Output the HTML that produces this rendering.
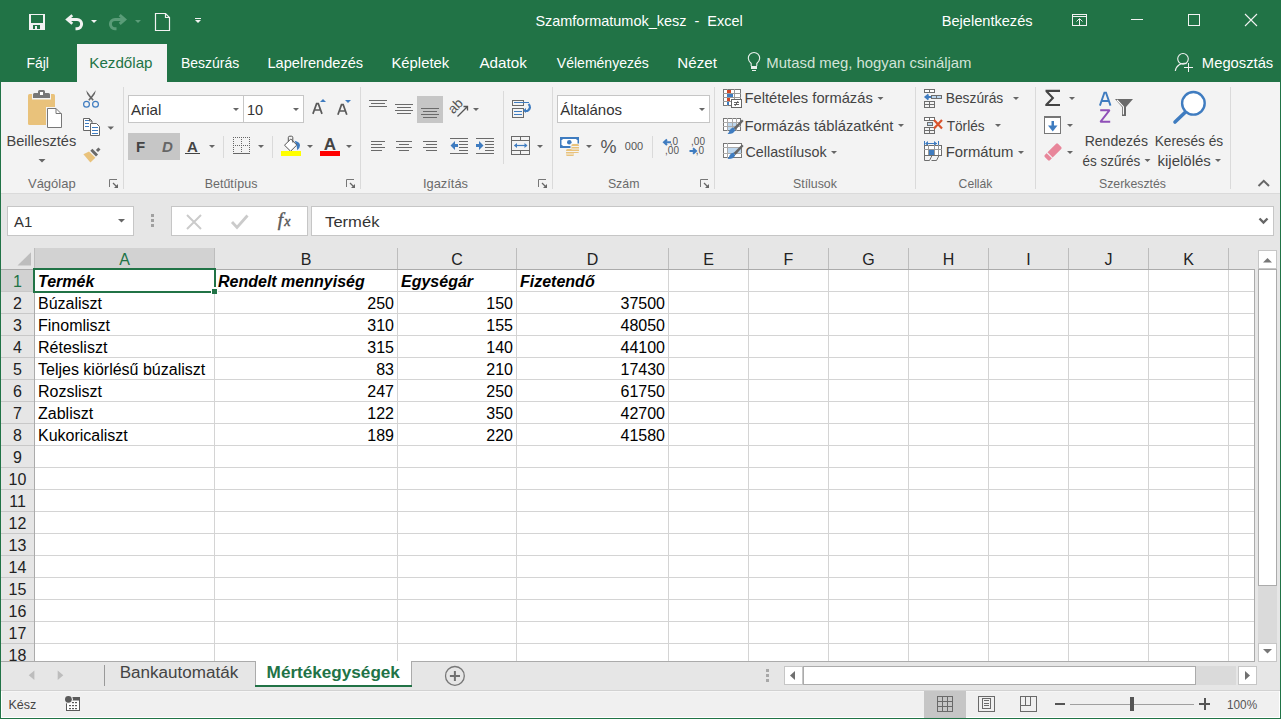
<!DOCTYPE html><html><head><meta charset="utf-8"><style>
*{margin:0;padding:0}
html,body{width:1281px;height:719px;overflow:hidden;background:#217346}
</style></head><body><svg width="1281" height="719" viewBox="0 0 1281 719" style="position:absolute;left:0;top:0" font-family="Liberation Sans, sans-serif"><rect x="0" y="0" width="1281" height="719" fill="#217346" />
<rect x="29" y="14" width="16" height="16" fill="#F2F2F2" />
<rect x="31" y="15" width="12" height="8" fill="#217346" />
<rect x="33" y="25" width="7" height="4" fill="#217346" />
<rect x="35" y="26" width="2" height="3" fill="#F2F2F2" />
<path d="M67.5 19.5H77A4.6 4.6 0 0 1 77 28.7H75.5" fill="none" stroke="#F2F2F2" stroke-width="3" />
<path d="M72.3 15.2L67.3 19.5L72.3 23.8" fill="none" stroke="#F2F2F2" stroke-width="2.7" stroke-linejoin="miter"/>
<path d="M91 20H97L94.0 23.0Z" fill="#F2F2F2" stroke="none" stroke-width="1" />
<path d="M124.5 19.5H115A4.6 4.6 0 0 0 115 28.7H116.5" fill="none" stroke="#5A9C78" stroke-width="3" />
<path d="M119.7 15.2L124.7 19.5L119.7 23.8" fill="none" stroke="#5A9C78" stroke-width="3" stroke-linejoin="miter"/>
<path d="M135 20H141L138.0 23.0Z" fill="#5A9C78" stroke="none" stroke-width="1" />
<path d="M155.5 13.5H165.5L169.5 17.5V30.5H155.5Z" fill="none" stroke="#F2F2F2" stroke-width="1.2" />
<path d="M165.5 13.5V17.5H169.5" fill="none" stroke="#F2F2F2" stroke-width="1.2" />
<rect x="195" y="18" width="6" height="1" fill="#F2F2F2" />
<path d="M195 20H201L198.0 23.0Z" fill="#F2F2F2" stroke="none" stroke-width="1" />
<text x="535.40" y="26" font-size="14.5" fill="#fff" font-weight="normal" font-style="normal" textLength="207.32" lengthAdjust="spacingAndGlyphs" >Szamformatumok_kesz&#160; -&#160; Excel</text>
<text x="941.79" y="26" font-size="14.5" fill="#fff" font-weight="normal" font-style="normal" textLength="90.76" lengthAdjust="spacingAndGlyphs" >Bejelentkezés</text>
<rect x="1072.5" y="14.5" width="14" height="11" fill="none" stroke="#F2F2F2" stroke-width="1"/>
<rect x="1072" y="16" width="15" height="1" fill="#F2F2F2" />
<rect x="1079" y="19" width="1" height="7" fill="#F2F2F2" />
<path d="M1076.5 21.5L1079.5 18.5L1082.5 21.5" fill="none" stroke="#F2F2F2" stroke-width="1" />
<rect x="1131" y="19" width="12" height="1" fill="#F2F2F2" />
<rect x="1188.5" y="14.5" width="11" height="11" fill="none" stroke="#F2F2F2" stroke-width="1"/>
<path d="M1245 14L1257 26M1257 14L1245 26" fill="none" stroke="#F2F2F2" stroke-width="1.1" />
<rect x="77" y="44" width="90" height="38" fill="#F3F3F3" />
<text x="26.44" y="68" font-size="14.5" fill="#fff" font-weight="normal" font-style="normal" textLength="22.47" lengthAdjust="spacingAndGlyphs" >Fájl</text>
<text x="89.25" y="68" font-size="14.5" fill="#217346" font-weight="normal" font-style="normal" textLength="63.31" lengthAdjust="spacingAndGlyphs" >Kezdőlap</text>
<text x="181.04" y="68" font-size="14.5" fill="#fff" font-weight="normal" font-style="normal" textLength="58.20" lengthAdjust="spacingAndGlyphs" >Beszúrás</text>
<text x="267.50" y="68" font-size="14.5" fill="#fff" font-weight="normal" font-style="normal" textLength="95.56" lengthAdjust="spacingAndGlyphs" >Lapelrendezés</text>
<text x="391.48" y="68" font-size="14.5" fill="#fff" font-weight="normal" font-style="normal" textLength="57.76" lengthAdjust="spacingAndGlyphs" >Képletek</text>
<text x="479.40" y="68" font-size="14.5" fill="#fff" font-weight="normal" font-style="normal" textLength="47.41" lengthAdjust="spacingAndGlyphs" >Adatok</text>
<text x="556.80" y="68" font-size="14.5" fill="#fff" font-weight="normal" font-style="normal" textLength="92.04" lengthAdjust="spacingAndGlyphs" >Véleményezés</text>
<text x="677.36" y="68" font-size="14.5" fill="#fff" font-weight="normal" font-style="normal" textLength="39.57" lengthAdjust="spacingAndGlyphs" >Nézet</text>
<path d="M751.2 66V63.5C749.5 61.8 748.3 60.2 748.3 58.2A5.7 5.7 0 0 1 759.7 58.2C759.7 60.2 758.5 61.8 756.8 63.5V66" fill="none" stroke="#E8F0EB" stroke-width="1.1" />
<rect x="751" y="66" width="6" height="3" fill="#E8F0EB" />
<rect x="752" y="70" width="4" height="1" fill="#E8F0EB" />
<text x="766.37" y="68" font-size="14.5" fill="#D2E3D8" font-weight="normal" font-style="normal" textLength="205.11" lengthAdjust="spacingAndGlyphs" >Mutasd meg, hogyan csináljam</text>
<circle cx="1183" cy="58.8" r="5.3" fill="none" stroke="#F2F2F2" stroke-width="1.1"/>
<path d="M1175.3 71A9 9 0 0 1 1186.5 63.6" fill="none" stroke="#F2F2F2" stroke-width="1.1" />
<rect x="1184" y="67" width="9" height="1" fill="#F2F2F2" />
<rect x="1188" y="63" width="1" height="9" fill="#F2F2F2" />
<text x="1201.88" y="68" font-size="14.5" fill="#fff" font-weight="normal" font-style="normal" textLength="71.37" lengthAdjust="spacingAndGlyphs" >Megosztás</text>
<rect x="1" y="82" width="1279" height="111" fill="#F3F3F3" />
<rect x="1" y="193" width="1279" height="1" fill="#DADADA" />
<rect x="123" y="87" width="1" height="102" fill="#DADADA" />
<rect x="360" y="87" width="1" height="102" fill="#DADADA" />
<rect x="552" y="87" width="1" height="102" fill="#DADADA" />
<rect x="714" y="87" width="1" height="102" fill="#DADADA" />
<rect x="915" y="87" width="1" height="102" fill="#DADADA" />
<rect x="1035" y="87" width="1" height="102" fill="#DADADA" />
<rect x="1230" y="87" width="1" height="102" fill="#DADADA" />
<text x="28.00" y="188" font-size="12.8" fill="#6A6A6A" font-weight="normal" font-style="normal" textLength="47.62" lengthAdjust="spacingAndGlyphs" >Vágólap</text>
<text x="204.73" y="188" font-size="12.8" fill="#6A6A6A" font-weight="normal" font-style="normal" textLength="52.66" lengthAdjust="spacingAndGlyphs" >Betűtípus</text>
<text x="423.00" y="188" font-size="12.8" fill="#6A6A6A" font-weight="normal" font-style="normal" textLength="45.00" lengthAdjust="spacingAndGlyphs" >Igazítás</text>
<text x="607.90" y="188" font-size="12.8" fill="#6A6A6A" font-weight="normal" font-style="normal" textLength="31.54" lengthAdjust="spacingAndGlyphs" >Szám</text>
<text x="793.00" y="188" font-size="12.8" fill="#6A6A6A" font-weight="normal" font-style="normal" textLength="43.92" lengthAdjust="spacingAndGlyphs" >Stílusok</text>
<text x="958.60" y="188" font-size="12.8" fill="#6A6A6A" font-weight="normal" font-style="normal" textLength="33.83" lengthAdjust="spacingAndGlyphs" >Cellák</text>
<text x="1099.00" y="188" font-size="12.8" fill="#6A6A6A" font-weight="normal" font-style="normal" textLength="66.98" lengthAdjust="spacingAndGlyphs" >Szerkesztés</text>
<path d="M109.5 187V179.5H117" fill="none" stroke="#777" stroke-width="1" />
<path d="M113 183L116.5 186.5" fill="none" stroke="#666" stroke-width="1.2" />
<path d="M118 184V188H114Z" fill="#666" stroke="none" stroke-width="1" />
<path d="M346.5 187V179.5H354" fill="none" stroke="#777" stroke-width="1" />
<path d="M350 183L353.5 186.5" fill="none" stroke="#666" stroke-width="1.2" />
<path d="M355 184V188H351Z" fill="#666" stroke="none" stroke-width="1" />
<path d="M538.5 187V179.5H546" fill="none" stroke="#777" stroke-width="1" />
<path d="M542 183L545.5 186.5" fill="none" stroke="#666" stroke-width="1.2" />
<path d="M547 184V188H543Z" fill="#666" stroke="none" stroke-width="1" />
<path d="M700.5 187V179.5H708" fill="none" stroke="#777" stroke-width="1" />
<path d="M704 183L707.5 186.5" fill="none" stroke="#666" stroke-width="1.2" />
<path d="M709 184V188H705Z" fill="#666" stroke="none" stroke-width="1" />
<rect x="28" y="94" width="27" height="31" fill="#E9C27B" rx="1.5"/>
<rect x="32" y="89" width="19" height="10.5" fill="#F3F3F3" />
<path d="M33 98V94.5Q33 93 34.5 93H38V91.5Q38 90 39.5 90H43.5Q45 90 45 91.5V93H48.5Q50 93 50 94.5V98Z" fill="#777" stroke="none" stroke-width="1" />
<rect x="40" y="92" width="3" height="3" fill="#fff" />
<rect x="46" y="107" width="17" height="22" fill="#F3F3F3" />
<path d="M47.5 108.5H56L61.5 114V127.5H47.5Z" fill="#fff" stroke="#777" stroke-width="1" />
<path d="M56 108.5V113.5H61.5" fill="none" stroke="#777" stroke-width="1" />
<text x="6.49" y="145.5" font-size="14.5" fill="#444444" font-weight="normal" font-style="normal" textLength="69.76" lengthAdjust="spacingAndGlyphs" >Beillesztés</text>
<path d="M38.5 159H45.5L42.0 162.5Z" fill="#666" stroke="none" stroke-width="1" />
<path d="M86.2 90.2Q86.3 93.5 89.5 97.2L92.6 100.8L93.8 99.8L90.8 96.2Q88.5 93 86.2 90.2Z" fill="#666" stroke="none" stroke-width="1" />
<path d="M95.8 90.2Q95.7 93.5 92.5 97.2L89.4 100.8L88.2 99.8L91.2 96.2Q93.5 93 95.8 90.2Z" fill="#666" stroke="none" stroke-width="1" />
<circle cx="86.5" cy="104.3" r="2.9" fill="#F3F3F3" stroke="#3F7CC0" stroke-width="1.2"/>
<circle cx="95.5" cy="104.3" r="2.9" fill="#F3F3F3" stroke="#3F7CC0" stroke-width="1.2"/>
<path d="M83.5 118.5H89.5L92 121V130.5H83.5Z" fill="#fff" stroke="#666" stroke-width="1" />
<path d="M89.5 118.5V121H92" fill="none" stroke="#666" stroke-width="1" />
<path d="M90.5 123.5H96.5L99.5 126.5V135.5H90.5Z" fill="#fff" stroke="#666" stroke-width="1" />
<rect x="85" y="120" width="4" height="1" fill="#3F7CC0" />
<rect x="85" y="123" width="4" height="1" fill="#3F7CC0" />
<rect x="85" y="126" width="4" height="1" fill="#3F7CC0" />
<rect x="92" y="127" width="6" height="1" fill="#3F7CC0" />
<rect x="92" y="130" width="6" height="1" fill="#3F7CC0" />
<rect x="92" y="133" width="6" height="1" fill="#3F7CC0" />
<path d="M107.5 126.5H114L110.75 129.75Z" fill="#666" stroke="none" stroke-width="1" />
<path d="M83.4 154.3L89 151.6L95.4 157.8L90.4 162.4Z" fill="#E9C27B" stroke="none" stroke-width="1" />
<path d="M90.3 150.8L92.4 148.7L98.1 154.4L96 156.5Z" fill="#6A6A6A" stroke="none" stroke-width="1" />
<path d="M95.9 149.9L98.4 147.4L100.5 149.5L98 152Z" fill="#6A6A6A" stroke="none" stroke-width="1" />
<rect x="128.5" y="95.5" width="115" height="27" fill="#fff" stroke="#C6C6C6" stroke-width="1"/>
<rect x="243.5" y="95.5" width="60" height="27" fill="#fff" stroke="#C6C6C6" stroke-width="1"/>
<text x="131.00" y="115" font-size="15" fill="#333" font-weight="normal" font-style="normal" textLength="30.34" lengthAdjust="spacingAndGlyphs" >Arial</text>
<path d="M233 108H239L236.0 111.0Z" fill="#666" stroke="none" stroke-width="1" />
<text x="247.04" y="115" font-size="15" fill="#333" font-weight="normal" font-style="normal" textLength="16.09" lengthAdjust="spacingAndGlyphs" >10</text>
<path d="M293 108H299L296.0 111.0Z" fill="#666" stroke="none" stroke-width="1" />
<path d="M312.9 113.9L316.6 103.6H318.3L322 113.9M314.4 110H320.5" fill="none" stroke="#5A5A5A" stroke-width="1.7" />
<path d="M320 102L323 99L326 102Z" fill="#3F7CC0" stroke="none" stroke-width="1" />
<path d="M337.9 114.8L341.5 104.6H343.2L346.8 114.8M339.4 111H345.3" fill="none" stroke="#5A5A5A" stroke-width="1.7" />
<path d="M345 100L348 103L351 100Z" fill="#3F7CC0" stroke="none" stroke-width="1" />
<rect x="128" y="133" width="52" height="27" fill="#C6C6C6" />
<text x="140.5" y="152" font-size="15" fill="#444" font-weight="bold" font-style="normal" text-anchor="middle" >F</text>
<text x="167.5" y="152" font-size="15" fill="#666" font-weight="bold" font-style="italic" text-anchor="middle" >D</text>
<text x="192.5" y="152" font-size="15" fill="#444" font-weight="bold" font-style="normal" text-anchor="middle" >A</text>
<rect x="185" y="153" width="15" height="1" fill="#444" />
<path d="M209 145H215L212.0 148.0Z" fill="#666" stroke="none" stroke-width="1" />
<rect x="223" y="136" width="1" height="22" fill="#DADADA" />
<rect x="233" y="137" width="1" height="1" fill="#666" />
<rect x="233" y="145" width="1" height="1" fill="#666" />
<rect x="233" y="137" width="1" height="1" fill="#666" />
<rect x="249" y="137" width="1" height="1" fill="#666" />
<rect x="241" y="137" width="1" height="1" fill="#666" />
<rect x="235" y="137" width="1" height="1" fill="#666" />
<rect x="235" y="145" width="1" height="1" fill="#666" />
<rect x="233" y="139" width="1" height="1" fill="#666" />
<rect x="249" y="139" width="1" height="1" fill="#666" />
<rect x="241" y="139" width="1" height="1" fill="#666" />
<rect x="237" y="137" width="1" height="1" fill="#666" />
<rect x="237" y="145" width="1" height="1" fill="#666" />
<rect x="233" y="141" width="1" height="1" fill="#666" />
<rect x="249" y="141" width="1" height="1" fill="#666" />
<rect x="241" y="141" width="1" height="1" fill="#666" />
<rect x="239" y="137" width="1" height="1" fill="#666" />
<rect x="239" y="145" width="1" height="1" fill="#666" />
<rect x="233" y="143" width="1" height="1" fill="#666" />
<rect x="249" y="143" width="1" height="1" fill="#666" />
<rect x="241" y="143" width="1" height="1" fill="#666" />
<rect x="241" y="137" width="1" height="1" fill="#666" />
<rect x="241" y="145" width="1" height="1" fill="#666" />
<rect x="233" y="145" width="1" height="1" fill="#666" />
<rect x="249" y="145" width="1" height="1" fill="#666" />
<rect x="241" y="145" width="1" height="1" fill="#666" />
<rect x="243" y="137" width="1" height="1" fill="#666" />
<rect x="243" y="145" width="1" height="1" fill="#666" />
<rect x="233" y="147" width="1" height="1" fill="#666" />
<rect x="249" y="147" width="1" height="1" fill="#666" />
<rect x="241" y="147" width="1" height="1" fill="#666" />
<rect x="245" y="137" width="1" height="1" fill="#666" />
<rect x="245" y="145" width="1" height="1" fill="#666" />
<rect x="233" y="149" width="1" height="1" fill="#666" />
<rect x="249" y="149" width="1" height="1" fill="#666" />
<rect x="241" y="149" width="1" height="1" fill="#666" />
<rect x="247" y="137" width="1" height="1" fill="#666" />
<rect x="247" y="145" width="1" height="1" fill="#666" />
<rect x="233" y="151" width="1" height="1" fill="#666" />
<rect x="249" y="151" width="1" height="1" fill="#666" />
<rect x="241" y="151" width="1" height="1" fill="#666" />
<rect x="249" y="137" width="1" height="1" fill="#666" />
<rect x="249" y="145" width="1" height="1" fill="#666" />
<rect x="233" y="153" width="1" height="1" fill="#666" />
<rect x="249" y="153" width="1" height="1" fill="#666" />
<rect x="241" y="153" width="1" height="1" fill="#666" />
<rect x="233" y="153" width="17" height="1" fill="#666" />
<path d="M258 145H264L261.0 148.0Z" fill="#666" stroke="none" stroke-width="1" />
<rect x="272" y="136" width="1" height="22" fill="#DADADA" />
<path d="M294.5 140.8Q300 142 300 145.5Q300 148 297.3 150.3L296.5 145Z" fill="#3F7CC0" stroke="none" stroke-width="1" />
<path d="M284.5 145.2L290.8 139L296.8 145L290.6 151.2Z" fill="#fff" stroke="#555" stroke-width="1" />
<path d="M288.3 141.5V137.6Q288.3 136.2 289.8 136.2H291.5Q292.8 136.2 292.8 137.6V142.5" fill="none" stroke="#555" stroke-width="1" />
<rect x="281" y="151" width="20" height="5" fill="#FFFF00" />
<path d="M307 145H313L310.0 148.0Z" fill="#666" stroke="none" stroke-width="1" />
<text x="329.8" y="150" font-size="17" fill="#444" font-weight="bold" font-style="normal" text-anchor="middle" >A</text>
<rect x="320" y="151" width="20" height="5" fill="#FF0000" />
<path d="M346 145H352L349.0 148.0Z" fill="#666" stroke="none" stroke-width="1" />
<rect x="369" y="100" width="18" height="1" fill="#6A6A6A" />
<rect x="371" y="103" width="14" height="1" fill="#6A6A6A" />
<rect x="369" y="106" width="18" height="1" fill="#6A6A6A" />
<rect x="395" y="104" width="18" height="1" fill="#6A6A6A" />
<rect x="397" y="107" width="14" height="1" fill="#6A6A6A" />
<rect x="395" y="110" width="18" height="1" fill="#6A6A6A" />
<rect x="397" y="113" width="14" height="1" fill="#6A6A6A" />
<rect x="417" y="96" width="26" height="27" fill="#C6C6C6" />
<rect x="421" y="108" width="18" height="1" fill="#6A6A6A" />
<rect x="423" y="111" width="14" height="1" fill="#6A6A6A" />
<rect x="421" y="114" width="18" height="1" fill="#6A6A6A" />
<rect x="423" y="117" width="14" height="1" fill="#6A6A6A" />
<rect x="371" y="141" width="14" height="1" fill="#6A6A6A" />
<rect x="371" y="144" width="11" height="1" fill="#6A6A6A" />
<rect x="371" y="147" width="14" height="1" fill="#6A6A6A" />
<rect x="371" y="150" width="11" height="1" fill="#6A6A6A" />
<rect x="396" y="141" width="16" height="1" fill="#6A6A6A" />
<rect x="399" y="144" width="10" height="1" fill="#6A6A6A" />
<rect x="396" y="147" width="16" height="1" fill="#6A6A6A" />
<rect x="399" y="150" width="10" height="1" fill="#6A6A6A" />
<rect x="423" y="141" width="14" height="1" fill="#6A6A6A" />
<rect x="426" y="144" width="11" height="1" fill="#6A6A6A" />
<rect x="423" y="147" width="14" height="1" fill="#6A6A6A" />
<rect x="426" y="150" width="11" height="1" fill="#6A6A6A" />
<text x="453.3" y="114.5" font-size="13.5" fill="#555" font-weight="normal" font-style="normal" text-anchor="start" transform="rotate(-45 453.3 114.5)">ab</text>
<path d="M457.5 116.5L467.5 106.5M463.5 106.5H467.5V110.5" fill="none" stroke="#555" stroke-width="1.3" />
<path d="M473 108H479L476.0 111.0Z" fill="#666" stroke="none" stroke-width="1" />
<rect x="503" y="91" width="1" height="73" fill="#DADADA" />
<rect x="512.5" y="100.5" width="11" height="5" fill="none" stroke="#6A6A6A" stroke-width="1"/>
<rect x="512.5" y="108.5" width="11" height="9" fill="none" stroke="#6A6A6A" stroke-width="1"/>
<rect x="514" y="102" width="15" height="1" fill="#3F7CC0" />
<rect x="514" y="111" width="8" height="1" fill="#3F7CC0" />
<rect x="514" y="114" width="8" height="1" fill="#3F7CC0" />
<path d="M528.5 104Q532 107.5 527.5 111H524.5" fill="none" stroke="#3F7CC0" stroke-width="2.2" />
<path d="M523 110.5L526 108V113Z" fill="#3F7CC0" stroke="none" stroke-width="1" />
<rect x="450" y="138" width="18" height="1" fill="#6A6A6A" />
<rect x="450" y="153" width="18" height="1" fill="#6A6A6A" />
<rect x="459" y="141" width="9" height="1" fill="#6A6A6A" />
<rect x="459" y="144" width="9" height="1" fill="#6A6A6A" />
<rect x="459" y="147" width="9" height="1" fill="#6A6A6A" />
<rect x="459" y="150" width="9" height="1" fill="#6A6A6A" />
<path d="M450.5 145.5L455 141V144H458V147H455V150Z" fill="#3F7CC0" stroke="none" stroke-width="1" />
<rect x="476" y="138" width="18" height="1" fill="#6A6A6A" />
<rect x="476" y="153" width="18" height="1" fill="#6A6A6A" />
<rect x="485" y="141" width="9" height="1" fill="#6A6A6A" />
<rect x="485" y="144" width="9" height="1" fill="#6A6A6A" />
<rect x="485" y="147" width="9" height="1" fill="#6A6A6A" />
<rect x="485" y="150" width="9" height="1" fill="#6A6A6A" />
<path d="M483.5 145.5L479 141V144H476V147H479V150Z" fill="#3F7CC0" stroke="none" stroke-width="1" />
<rect x="511.5" y="136.5" width="18" height="18" fill="none" stroke="#6A6A6A" stroke-width="1"/>
<rect x="511" y="140" width="19" height="1" fill="#6A6A6A" />
<rect x="511" y="150" width="19" height="1" fill="#6A6A6A" />
<rect x="520" y="136" width="1" height="4" fill="#6A6A6A" />
<rect x="520" y="150" width="1" height="5" fill="#6A6A6A" />
<path d="M514.5 145.5H527" fill="none" stroke="#3F7CC0" stroke-width="1.2" />
<path d="M514 145.5L517 143V148Z M527.5 145.5L524.5 143V148Z" fill="#3F7CC0" stroke="none" stroke-width="1" />
<path d="M537 145H543L540.0 148.0Z" fill="#666" stroke="none" stroke-width="1" />
<rect x="557.5" y="95.5" width="152" height="27" fill="#fff" stroke="#C6C6C6" stroke-width="1"/>
<text x="560.30" y="115" font-size="15" fill="#333" font-weight="normal" font-style="normal" textLength="61.80" lengthAdjust="spacingAndGlyphs" >Általános</text>
<path d="M699 108H705L702.0 111.0Z" fill="#666" stroke="none" stroke-width="1" />
<rect x="560" y="137" width="19" height="11" fill="#3F7CC0" />
<path d="M563 139H576L577.5 140.5V144.5L576 146H563L561.5 144.5V140.5Z" fill="#fff" stroke="none" stroke-width="1" />
<circle cx="569.3" cy="142.3" r="2.3" fill="#3F7CC0"/>
<rect x="570.5" y="143.5" width="9" height="10.5" fill="#F3F3F3" />
<rect x="565" y="148.5" width="10" height="8.5" fill="#F3F3F3" />
<rect x="571.5" y="144" width="7.5" height="9" fill="#E9C27B" rx="1.5"/>
<rect x="566" y="149" width="8" height="7" fill="#E9C27B" rx="1.5"/>
<rect x="571.5" y="146" width="7.5" height="1" fill="#F3F3F3" />
<rect x="571.5" y="148.5" width="7.5" height="1" fill="#F3F3F3" />
<rect x="571.5" y="151" width="7.5" height="1" fill="#F3F3F3" />
<rect x="566" y="151" width="8" height="1" fill="#F3F3F3" />
<rect x="566" y="153.5" width="8" height="1" fill="#F3F3F3" />
<path d="M586 145H592L589.0 148.0Z" fill="#666" stroke="none" stroke-width="1" />
<text x="608.5" y="153" font-size="18" fill="#555" font-weight="normal" font-style="normal" text-anchor="middle" >%</text>
<text x="634" y="150" font-size="11" fill="#555" font-weight="normal" font-style="normal" text-anchor="middle" >000</text>
<rect x="652" y="136" width="1" height="22" fill="#DADADA" />
<text x="674" y="145" font-size="10" fill="#555" font-weight="normal" font-style="normal" text-anchor="middle" >,0</text>
<text x="672" y="153.8" font-size="10" fill="#555" font-weight="normal" font-style="normal" text-anchor="middle" >,00</text>
<path d="M667 139.5L664 142.2L667 144.9M664.5 142.2H671" fill="none" stroke="#3F7CC0" stroke-width="2" />
<text x="698" y="145" font-size="10" fill="#555" font-weight="normal" font-style="normal" text-anchor="middle" >,00</text>
<text x="700" y="153.8" font-size="10" fill="#555" font-weight="normal" font-style="normal" text-anchor="middle" >,0</text>
<path d="M693 148.3L696 151L693 153.7M689.5 151H695.5" fill="none" stroke="#3F7CC0" stroke-width="2" />
<rect x="723.5" y="89.5" width="17" height="16" fill="#fff" stroke="#777" stroke-width="1"/>
<rect x="727" y="89" width="1" height="17" fill="#999" />
<rect x="734" y="89" width="1" height="17" fill="#999" />
<rect x="723" y="93" width="18" height="1" fill="#999" />
<rect x="723" y="97" width="18" height="1" fill="#999" />
<rect x="723" y="101" width="18" height="1" fill="#999" />
<rect x="727" y="90" width="4" height="3" fill="#D24726" />
<rect x="727" y="94" width="6" height="3" fill="#3F7CC0" />
<rect x="727" y="98" width="3" height="3" fill="#D24726" />
<rect x="727" y="102" width="2" height="3" fill="#3F7CC0" />
<rect x="731.5" y="99.5" width="10" height="8" fill="#fff" stroke="#666" stroke-width="1"/>
<path d="M734 102.5H739M734 104.5H739M738 101L735 106" fill="none" stroke="#555" stroke-width="0.9" />
<text x="744.49" y="103.4" font-size="14.5" fill="#444444" font-weight="normal" font-style="normal" textLength="128.27" lengthAdjust="spacingAndGlyphs" >Feltételes formázás</text>
<path d="M877.5 97H883.5L880.5 100.0Z" fill="#666" stroke="none" stroke-width="1" />
<rect x="723.5" y="118.5" width="17" height="12" fill="#fff" stroke="#777" stroke-width="1"/>
<rect x="727" y="118" width="1" height="13" fill="#AAA" />
<rect x="732" y="118" width="1" height="13" fill="#AAA" />
<rect x="736" y="118" width="1" height="13" fill="#AAA" />
<rect x="723" y="122" width="18" height="1" fill="#AAA" />
<rect x="723" y="126" width="18" height="1" fill="#AAA" />
<rect x="728" y="123" width="4" height="3" fill="#BDD7EE" />
<rect x="733" y="123" width="3" height="3" fill="#BDD7EE" />
<rect x="728" y="127" width="4" height="3" fill="#BDD7EE" />
<rect x="733" y="127" width="3" height="3" fill="#BDD7EE" />
<path d="M742 119.5L743.6 121.1L735.5 130.0L733.5 128.0Z" fill="#666" stroke="none" stroke-width="1" />
<path d="M733.8 127.5Q730.5 128.0 729.5 130.5Q729 132.5 727.5 134.0Q733 134.5 735.2 130.5Z" fill="#3F7CC0" stroke="none" stroke-width="1" />
<text x="744.48" y="130.6" font-size="14.5" fill="#444444" font-weight="normal" font-style="normal" textLength="148.94" lengthAdjust="spacingAndGlyphs" >Formázás táblázatként</text>
<path d="M898 124H904L901.0 127.0Z" fill="#666" stroke="none" stroke-width="1" />
<rect x="723.5" y="143.5" width="18" height="14" fill="#fff" stroke="#777" stroke-width="1"/>
<rect x="727" y="143" width="1" height="15" fill="#AAA" />
<rect x="723" y="147" width="19" height="1" fill="#AAA" />
<rect x="723" y="153" width="19" height="1" fill="#AAA" />
<rect x="728" y="148" width="13" height="5" fill="#BDD7EE" />
<path d="M742 144.5L743.6 146.1L735.5 155.0L733.5 153.0Z" fill="#666" stroke="none" stroke-width="1" />
<path d="M733.8 152.5Q730.5 153.0 729.5 155.5Q729 157.5 727.5 159.0Q733 159.5 735.2 155.5Z" fill="#3F7CC0" stroke="none" stroke-width="1" />
<text x="745.50" y="157.2" font-size="14.5" fill="#444444" font-weight="normal" font-style="normal" textLength="81.06" lengthAdjust="spacingAndGlyphs" >Cellastílusok</text>
<path d="M831 151H837L834.0 154.0Z" fill="#666" stroke="none" stroke-width="1" />
<rect x="924.5" y="89.5" width="10" height="3" fill="#fff" stroke="#6E6E6E" stroke-width="1"/>
<rect x="929" y="89" width="1" height="4" fill="#6E6E6E" />
<rect x="931.5" y="95.5" width="10" height="3" fill="#BDD7EE" stroke="#6E6E6E" stroke-width="1"/>
<rect x="936" y="95" width="1" height="4" fill="#6E6E6E" />
<path d="M928.5 94.5L925.5 97L928.5 99.5M925.5 97H931" fill="none" stroke="#3F7CC0" stroke-width="2" />
<rect x="924.5" y="101.5" width="10" height="6" fill="none" stroke="#6E6E6E" stroke-width="1"/>
<rect x="929" y="101" width="1" height="7" fill="#6E6E6E" />
<rect x="924" y="104" width="11" height="1" fill="#6E6E6E" />
<text x="945.75" y="103.4" font-size="14.5" fill="#444444" font-weight="normal" font-style="normal" textLength="57.49" lengthAdjust="spacingAndGlyphs" >Beszúrás</text>
<path d="M1013 97H1019L1016.0 100.0Z" fill="#666" stroke="none" stroke-width="1" />
<rect x="924.5" y="117.5" width="10" height="3" fill="#fff" stroke="#6E6E6E" stroke-width="1"/>
<rect x="929" y="117" width="1" height="4" fill="#6E6E6E" />
<rect x="927.5" y="122.5" width="5" height="3" fill="#BDD7EE" stroke="#6E6E6E" stroke-width="1"/>
<rect x="924.5" y="127.5" width="10" height="6" fill="none" stroke="#6E6E6E" stroke-width="1"/>
<rect x="929" y="127" width="1" height="7" fill="#6E6E6E" />
<rect x="924" y="130" width="11" height="1" fill="#6E6E6E" />
<path d="M934 120L942 128.5M942 120L934 128.5" fill="none" stroke="#D9532C" stroke-width="2.2" />
<text x="946.70" y="130.6" font-size="14.5" fill="#444444" font-weight="normal" font-style="normal" textLength="37.94" lengthAdjust="spacingAndGlyphs" >Törlés</text>
<path d="M995 124H1001L998.0 127.0Z" fill="#666" stroke="none" stroke-width="1" />
<rect x="924" y="141" width="1" height="4" fill="#3F7CC0" />
<rect x="938" y="141" width="1" height="4" fill="#3F7CC0" />
<rect x="926" y="143" width="11" height="1" fill="#3F7CC0" />
<path d="M925 143.5L928 141V146Z M937 143.5L934 141V146Z" fill="#3F7CC0" stroke="none" stroke-width="1" />
<rect x="924.5" y="145.5" width="17" height="10" fill="#fff" stroke="#6E6E6E" stroke-width="1"/>
<rect x="928" y="145" width="1" height="11" fill="#999" />
<rect x="934" y="145" width="1" height="11" fill="#999" />
<rect x="938" y="145" width="1" height="11" fill="#999" />
<rect x="924" y="149" width="18" height="1" fill="#999" />
<rect x="924" y="155" width="18" height="1" fill="#6E6E6E" />
<rect x="929" y="150" width="5" height="5" fill="#3F7CC0" />
<path d="M924.5 155.5V160.5H929.5L932 155.5M931.5 160.5H936.5L939 155.5" fill="none" stroke="#6E6E6E" stroke-width="1" />
<text x="945.68" y="157.2" font-size="14.5" fill="#444444" font-weight="normal" font-style="normal" textLength="67.71" lengthAdjust="spacingAndGlyphs" >Formátum</text>
<path d="M1018 151H1024L1021.0 154.0Z" fill="#666" stroke="none" stroke-width="1" />
<path d="M1045.5 89.8H1060V91.9H1048.6L1054.3 98L1048.6 103.9H1060V106H1045.3V104.2L1051.4 98L1045.5 91.7Z" fill="#444" stroke="none" stroke-width="1" />
<path d="M1069 97H1075L1072.0 100.0Z" fill="#666" stroke="none" stroke-width="1" />
<rect x="1044.5" y="116.5" width="16" height="17" fill="#fff" stroke="#777" stroke-width="1"/>
<rect x="1044" y="116" width="17" height="2" fill="#777" />
<rect x="1051.5" y="121" width="2.5" height="6" fill="#3F7CC0" />
<path d="M1048 125.6H1057.5L1052.75 131.5Z" fill="#3F7CC0" stroke="none" stroke-width="1" />
<path d="M1067 124H1073L1070.0 127.0Z" fill="#666" stroke="none" stroke-width="1" />
<g transform="translate(1053,152) rotate(-45)"><rect x="-9.3" y="-3.6" width="18.6" height="7.2" rx="1.3" fill="#E8869A"/><rect x="-5.3" y="-4" width="1.2" height="8" fill="#F3F3F3"/></g>
<path d="M1067 151H1073L1070.0 154.0Z" fill="#666" stroke="none" stroke-width="1" />
<path d="M1099.9 105.6L1104.4 92.6H1106L1110.5 105.6M1101.6 101H1108.8" fill="none" stroke="#3F7CC0" stroke-width="1.9" />
<path d="M1100.2 110.2H1109.6L1100.4 121.8H1110.2" fill="none" stroke="#9050B8" stroke-width="1.9" stroke-linejoin="bevel"/>
<path d="M1115 99H1133L1126 107V116H1122V107Z" fill="#6A6A6A" stroke="none" stroke-width="1" />
<path d="M1117 100L1123.4 106.6V114.5" fill="none" stroke="#fff" stroke-width="1.1" />
<text x="1084.63" y="146" font-size="14.5" fill="#444444" font-weight="normal" font-style="normal" textLength="63.31" lengthAdjust="spacingAndGlyphs" >Rendezés</text>
<text x="1082.50" y="165.6" font-size="14.5" fill="#444444" font-weight="normal" font-style="normal" textLength="57.73" lengthAdjust="spacingAndGlyphs" >és szűrés</text>
<path d="M1144.5 159H1150.5L1147.5 162.0Z" fill="#666" stroke="none" stroke-width="1" />
<circle cx="1193.4" cy="103.3" r="11.3" fill="#fff" stroke="#3F7CC0" stroke-width="2.4"/>
<path d="M1175 122L1185 112.5" fill="none" stroke="#3F7CC0" stroke-width="3.6" stroke-linecap="round"/>
<text x="1154.65" y="146" font-size="14.5" fill="#444444" font-weight="normal" font-style="normal" textLength="68.58" lengthAdjust="spacingAndGlyphs" >Keresés és</text>
<text x="1157.50" y="165.6" font-size="14.5" fill="#444444" font-weight="normal" font-style="normal" textLength="53.36" lengthAdjust="spacingAndGlyphs" >kijelölés</text>
<path d="M1215 159H1221L1218.0 162.0Z" fill="#666" stroke="none" stroke-width="1" />
<text x="1132" y="187" font-size="13" fill="#fff" font-weight="normal" font-style="normal" text-anchor="start" ></text>
<path d="M1258.5 186L1263.75 180.8L1269 186" fill="none" stroke="#666" stroke-width="2" />
<rect x="1" y="194" width="1279" height="54" fill="#E6E6E6" />
<rect x="7.5" y="206.5" width="126" height="29" fill="#fff" stroke="#C6C6C6" stroke-width="1"/>
<text x="14.05" y="227" font-size="15" fill="#333" font-weight="normal" font-style="normal" textLength="18.29" lengthAdjust="spacingAndGlyphs" >A1</text>
<path d="M118 219H125L121.5 222.5Z" fill="#666" stroke="none" stroke-width="1" />
<rect x="151" y="214" width="3" height="3" fill="#A0A0A0" />
<rect x="151" y="219" width="3" height="3" fill="#A0A0A0" />
<rect x="151" y="224" width="3" height="3" fill="#A0A0A0" />
<rect x="171.5" y="206.5" width="136" height="29" fill="#fff" stroke="#C6C6C6" stroke-width="1"/>
<path d="M187 215L201 229M201 215L187 229" fill="none" stroke="#CBCBCB" stroke-width="2" />
<path d="M232 222L237 227.5L247.5 215.5" fill="none" stroke="#CBCBCB" stroke-width="2.8" />
<text x="280.5" y="226.3" font-size="19" fill="#5A5A5A" font-weight="normal" font-style="italic" text-anchor="middle" font-family="Liberation Serif" stroke="#5A5A5A" stroke-width="0.45">f</text>
<text x="287.3" y="226.3" font-size="14" fill="#5A5A5A" font-weight="normal" font-style="italic" text-anchor="middle" font-family="Liberation Serif" stroke="#5A5A5A" stroke-width="0.45">x</text>
<rect x="311.5" y="206.5" width="962" height="29" fill="#fff" stroke="#C6C6C6" stroke-width="1"/>
<text x="325.10" y="227" font-size="15" fill="#333" font-weight="normal" font-style="normal" textLength="54.35" lengthAdjust="spacingAndGlyphs" >Termék</text>
<path d="M1259.5 218.5L1263.5 222.5L1267.5 218.5" fill="none" stroke="#666" stroke-width="2.4" />
<rect x="35" y="270" width="1220" height="391" fill="#fff" />
<rect x="1" y="248" width="1254" height="21" fill="#E6E6E6" />
<rect x="34" y="248" width="180" height="21" fill="#D2D2D2" />
<rect x="1" y="269" width="33" height="392" fill="#E6E6E6" />
<rect x="1" y="270" width="33" height="21" fill="#D2D2D2" />
<path d="M17.5 265.5L31 252.3V265.5Z" fill="#BDBDBD" stroke="none" stroke-width="1" />
<rect x="214" y="270" width="1" height="391" fill="#D4D4D4" />
<rect x="397" y="270" width="1" height="391" fill="#D4D4D4" />
<rect x="516" y="270" width="1" height="391" fill="#D4D4D4" />
<rect x="668" y="270" width="1" height="391" fill="#D4D4D4" />
<rect x="748" y="270" width="1" height="391" fill="#D4D4D4" />
<rect x="828" y="270" width="1" height="391" fill="#D4D4D4" />
<rect x="908" y="270" width="1" height="391" fill="#D4D4D4" />
<rect x="988" y="270" width="1" height="391" fill="#D4D4D4" />
<rect x="1068" y="270" width="1" height="391" fill="#D4D4D4" />
<rect x="1148" y="270" width="1" height="391" fill="#D4D4D4" />
<rect x="1228" y="270" width="1" height="391" fill="#D4D4D4" />
<rect x="34" y="248" width="1" height="21" fill="#BDBDBD" />
<rect x="214" y="248" width="1" height="21" fill="#BDBDBD" />
<rect x="397" y="248" width="1" height="21" fill="#BDBDBD" />
<rect x="516" y="248" width="1" height="21" fill="#BDBDBD" />
<rect x="668" y="248" width="1" height="21" fill="#BDBDBD" />
<rect x="748" y="248" width="1" height="21" fill="#BDBDBD" />
<rect x="828" y="248" width="1" height="21" fill="#BDBDBD" />
<rect x="908" y="248" width="1" height="21" fill="#BDBDBD" />
<rect x="988" y="248" width="1" height="21" fill="#BDBDBD" />
<rect x="1068" y="248" width="1" height="21" fill="#BDBDBD" />
<rect x="1148" y="248" width="1" height="21" fill="#BDBDBD" />
<rect x="1228" y="248" width="1" height="21" fill="#BDBDBD" />
<rect x="35" y="291" width="1219" height="1" fill="#D4D4D4" />
<rect x="1" y="291" width="33" height="1" fill="#C8C8C8" />
<rect x="35" y="313" width="1219" height="1" fill="#D4D4D4" />
<rect x="1" y="313" width="33" height="1" fill="#C8C8C8" />
<rect x="35" y="335" width="1219" height="1" fill="#D4D4D4" />
<rect x="1" y="335" width="33" height="1" fill="#C8C8C8" />
<rect x="35" y="357" width="1219" height="1" fill="#D4D4D4" />
<rect x="1" y="357" width="33" height="1" fill="#C8C8C8" />
<rect x="35" y="379" width="1219" height="1" fill="#D4D4D4" />
<rect x="1" y="379" width="33" height="1" fill="#C8C8C8" />
<rect x="35" y="401" width="1219" height="1" fill="#D4D4D4" />
<rect x="1" y="401" width="33" height="1" fill="#C8C8C8" />
<rect x="35" y="423" width="1219" height="1" fill="#D4D4D4" />
<rect x="1" y="423" width="33" height="1" fill="#C8C8C8" />
<rect x="35" y="445" width="1219" height="1" fill="#D4D4D4" />
<rect x="1" y="445" width="33" height="1" fill="#C8C8C8" />
<rect x="35" y="467" width="1219" height="1" fill="#D4D4D4" />
<rect x="1" y="467" width="33" height="1" fill="#C8C8C8" />
<rect x="35" y="489" width="1219" height="1" fill="#D4D4D4" />
<rect x="1" y="489" width="33" height="1" fill="#C8C8C8" />
<rect x="35" y="511" width="1219" height="1" fill="#D4D4D4" />
<rect x="1" y="511" width="33" height="1" fill="#C8C8C8" />
<rect x="35" y="533" width="1219" height="1" fill="#D4D4D4" />
<rect x="1" y="533" width="33" height="1" fill="#C8C8C8" />
<rect x="35" y="555" width="1219" height="1" fill="#D4D4D4" />
<rect x="1" y="555" width="33" height="1" fill="#C8C8C8" />
<rect x="35" y="577" width="1219" height="1" fill="#D4D4D4" />
<rect x="1" y="577" width="33" height="1" fill="#C8C8C8" />
<rect x="35" y="599" width="1219" height="1" fill="#D4D4D4" />
<rect x="1" y="599" width="33" height="1" fill="#C8C8C8" />
<rect x="35" y="621" width="1219" height="1" fill="#D4D4D4" />
<rect x="1" y="621" width="33" height="1" fill="#C8C8C8" />
<rect x="35" y="643" width="1219" height="1" fill="#D4D4D4" />
<rect x="1" y="643" width="33" height="1" fill="#C8C8C8" />
<rect x="1" y="269" width="1254" height="1" fill="#ABABAB" />
<rect x="34" y="269" width="1" height="392" fill="#ABABAB" />
<rect x="1254" y="269" width="1" height="392" fill="#ABABAB" />
<text x="124.5" y="265" font-size="16" fill="#217346" font-weight="normal" font-style="normal" text-anchor="middle" >A</text>
<text x="306.0" y="265" font-size="16" fill="#222" font-weight="normal" font-style="normal" text-anchor="middle" >B</text>
<text x="457.0" y="265" font-size="16" fill="#222" font-weight="normal" font-style="normal" text-anchor="middle" >C</text>
<text x="592.5" y="265" font-size="16" fill="#222" font-weight="normal" font-style="normal" text-anchor="middle" >D</text>
<text x="708.5" y="265" font-size="16" fill="#222" font-weight="normal" font-style="normal" text-anchor="middle" >E</text>
<text x="788.5" y="265" font-size="16" fill="#222" font-weight="normal" font-style="normal" text-anchor="middle" >F</text>
<text x="868.5" y="265" font-size="16" fill="#222" font-weight="normal" font-style="normal" text-anchor="middle" >G</text>
<text x="948.5" y="265" font-size="16" fill="#222" font-weight="normal" font-style="normal" text-anchor="middle" >H</text>
<text x="1028.5" y="265" font-size="16" fill="#222" font-weight="normal" font-style="normal" text-anchor="middle" >I</text>
<text x="1108.5" y="265" font-size="16" fill="#222" font-weight="normal" font-style="normal" text-anchor="middle" >J</text>
<text x="1188.5" y="265" font-size="16" fill="#222" font-weight="normal" font-style="normal" text-anchor="middle" >K</text>
<text x="17.5" y="287" font-size="16" fill="#217346" font-weight="normal" font-style="normal" text-anchor="middle" >1</text>
<text x="17.5" y="309" font-size="16" fill="#222" font-weight="normal" font-style="normal" text-anchor="middle" >2</text>
<text x="17.5" y="331" font-size="16" fill="#222" font-weight="normal" font-style="normal" text-anchor="middle" >3</text>
<text x="17.5" y="353" font-size="16" fill="#222" font-weight="normal" font-style="normal" text-anchor="middle" >4</text>
<text x="17.5" y="375" font-size="16" fill="#222" font-weight="normal" font-style="normal" text-anchor="middle" >5</text>
<text x="17.5" y="397" font-size="16" fill="#222" font-weight="normal" font-style="normal" text-anchor="middle" >6</text>
<text x="17.5" y="419" font-size="16" fill="#222" font-weight="normal" font-style="normal" text-anchor="middle" >7</text>
<text x="17.5" y="441" font-size="16" fill="#222" font-weight="normal" font-style="normal" text-anchor="middle" >8</text>
<text x="17.5" y="463" font-size="16" fill="#222" font-weight="normal" font-style="normal" text-anchor="middle" >9</text>
<text x="17.5" y="485" font-size="16" fill="#222" font-weight="normal" font-style="normal" text-anchor="middle" >10</text>
<text x="17.5" y="507" font-size="16" fill="#222" font-weight="normal" font-style="normal" text-anchor="middle" >11</text>
<text x="17.5" y="529" font-size="16" fill="#222" font-weight="normal" font-style="normal" text-anchor="middle" >12</text>
<text x="17.5" y="551" font-size="16" fill="#222" font-weight="normal" font-style="normal" text-anchor="middle" >13</text>
<text x="17.5" y="573" font-size="16" fill="#222" font-weight="normal" font-style="normal" text-anchor="middle" >14</text>
<text x="17.5" y="595" font-size="16" fill="#222" font-weight="normal" font-style="normal" text-anchor="middle" >15</text>
<text x="17.5" y="617" font-size="16" fill="#222" font-weight="normal" font-style="normal" text-anchor="middle" >16</text>
<text x="17.5" y="639" font-size="16" fill="#222" font-weight="normal" font-style="normal" text-anchor="middle" >17</text>
<text x="17.5" y="661" font-size="16" fill="#222" font-weight="normal" font-style="normal" text-anchor="middle" >18</text>
<text x="38" y="287" font-size="16" fill="#000" font-weight="bold" font-style="italic" text-anchor="start" >Termék</text>
<text x="218" y="287" font-size="16" fill="#000" font-weight="bold" font-style="italic" text-anchor="start" >Rendelt mennyiség</text>
<text x="401" y="287" font-size="16" fill="#000" font-weight="bold" font-style="italic" text-anchor="start" >Egységár</text>
<text x="520" y="287" font-size="16" fill="#000" font-weight="bold" font-style="italic" text-anchor="start" >Fizetendő</text>
<text x="38" y="309" font-size="16" fill="#000" font-weight="normal" font-style="normal" text-anchor="start" >Búzaliszt</text>
<text x="394" y="309" font-size="16" fill="#000" font-weight="normal" font-style="normal" text-anchor="end" >250</text>
<text x="513" y="309" font-size="16" fill="#000" font-weight="normal" font-style="normal" text-anchor="end" >150</text>
<text x="665" y="309" font-size="16" fill="#000" font-weight="normal" font-style="normal" text-anchor="end" >37500</text>
<text x="38" y="331" font-size="16" fill="#000" font-weight="normal" font-style="normal" text-anchor="start" >Finomliszt</text>
<text x="394" y="331" font-size="16" fill="#000" font-weight="normal" font-style="normal" text-anchor="end" >310</text>
<text x="513" y="331" font-size="16" fill="#000" font-weight="normal" font-style="normal" text-anchor="end" >155</text>
<text x="665" y="331" font-size="16" fill="#000" font-weight="normal" font-style="normal" text-anchor="end" >48050</text>
<text x="38" y="353" font-size="16" fill="#000" font-weight="normal" font-style="normal" text-anchor="start" >Rétesliszt</text>
<text x="394" y="353" font-size="16" fill="#000" font-weight="normal" font-style="normal" text-anchor="end" >315</text>
<text x="513" y="353" font-size="16" fill="#000" font-weight="normal" font-style="normal" text-anchor="end" >140</text>
<text x="665" y="353" font-size="16" fill="#000" font-weight="normal" font-style="normal" text-anchor="end" >44100</text>
<text x="38" y="375" font-size="16" fill="#000" font-weight="normal" font-style="normal" text-anchor="start" >Teljes kiörlésű búzaliszt</text>
<text x="394" y="375" font-size="16" fill="#000" font-weight="normal" font-style="normal" text-anchor="end" >83</text>
<text x="513" y="375" font-size="16" fill="#000" font-weight="normal" font-style="normal" text-anchor="end" >210</text>
<text x="665" y="375" font-size="16" fill="#000" font-weight="normal" font-style="normal" text-anchor="end" >17430</text>
<text x="38" y="397" font-size="16" fill="#000" font-weight="normal" font-style="normal" text-anchor="start" >Rozsliszt</text>
<text x="394" y="397" font-size="16" fill="#000" font-weight="normal" font-style="normal" text-anchor="end" >247</text>
<text x="513" y="397" font-size="16" fill="#000" font-weight="normal" font-style="normal" text-anchor="end" >250</text>
<text x="665" y="397" font-size="16" fill="#000" font-weight="normal" font-style="normal" text-anchor="end" >61750</text>
<text x="38" y="419" font-size="16" fill="#000" font-weight="normal" font-style="normal" text-anchor="start" >Zabliszt</text>
<text x="394" y="419" font-size="16" fill="#000" font-weight="normal" font-style="normal" text-anchor="end" >122</text>
<text x="513" y="419" font-size="16" fill="#000" font-weight="normal" font-style="normal" text-anchor="end" >350</text>
<text x="665" y="419" font-size="16" fill="#000" font-weight="normal" font-style="normal" text-anchor="end" >42700</text>
<text x="38" y="441" font-size="16" fill="#000" font-weight="normal" font-style="normal" text-anchor="start" >Kukoricaliszt</text>
<text x="394" y="441" font-size="16" fill="#000" font-weight="normal" font-style="normal" text-anchor="end" >189</text>
<text x="513" y="441" font-size="16" fill="#000" font-weight="normal" font-style="normal" text-anchor="end" >220</text>
<text x="665" y="441" font-size="16" fill="#000" font-weight="normal" font-style="normal" text-anchor="end" >41580</text>
<rect x="33" y="268" width="183" height="2" fill="#217346" />
<rect x="33" y="268" width="2" height="25" fill="#217346" />
<rect x="214" y="268" width="2" height="19" fill="#217346" />
<rect x="33" y="291" width="178" height="2" fill="#217346" />
<rect x="211" y="287" width="7" height="7" fill="#fff" />
<rect x="212" y="289" width="5" height="5" fill="#217346" />
<rect x="1255" y="248" width="25" height="414" fill="#E6E6E6" />
<rect x="1258.5" y="250.5" width="18" height="18" fill="#fff" stroke="#C6C6C6" stroke-width="1"/>
<path d="M1263 262.5H1272L1267.5 258Z" fill="#777" stroke="none" stroke-width="1" />
<rect x="1258.5" y="269.5" width="18" height="316" fill="#fff" stroke="#ABABAB" stroke-width="1"/>
<rect x="1258" y="586" width="19" height="57" fill="#DADADA" />
<rect x="1258.5" y="643.5" width="18" height="18" fill="#fff" stroke="#C6C6C6" stroke-width="1"/>
<path d="M1263 649H1272L1267.5 653.5Z" fill="#777" stroke="none" stroke-width="1" />
<rect x="1" y="662" width="1279" height="28" fill="#E6E6E6" />
<rect x="1" y="661" width="1254" height="1" fill="#ABABAB" />
<path d="M34.4 670.5V680L28.7 675.25Z" fill="#BDBDBD" stroke="none" stroke-width="1" />
<path d="M57.7 670.5V680L63.3 675.25Z" fill="#BDBDBD" stroke="none" stroke-width="1" />
<rect x="104" y="665" width="1" height="21" fill="#999" />
<text x="119.73" y="678" font-size="16" fill="#444" font-weight="normal" font-style="normal" textLength="118.60" lengthAdjust="spacingAndGlyphs" >Bankautomaták</text>
<rect x="255" y="661" width="1" height="25" fill="#ABABAB" />
<rect x="256" y="661" width="155" height="24" fill="#fff" />
<rect x="411" y="661" width="1" height="25" fill="#ABABAB" />
<rect x="255" y="685" width="157" height="2" fill="#217346" />
<text x="266.63" y="678" font-size="16" fill="#217346" font-weight="bold" font-style="normal" textLength="133.26" lengthAdjust="spacingAndGlyphs" >Mértékegységek</text>
<circle cx="454.9" cy="675.9" r="9.4" fill="none" stroke="#777" stroke-width="1.3"/>
<path d="M449.9 675.9H460M454.9 670.9V681" fill="none" stroke="#707070" stroke-width="2" />
<rect x="766" y="669" width="3" height="3" fill="#A8A8A8" />
<rect x="766" y="674" width="3" height="3" fill="#A8A8A8" />
<rect x="766" y="679" width="3" height="3" fill="#A8A8A8" />
<rect x="784.5" y="666.5" width="18" height="18" fill="#fff" stroke="#C6C6C6" stroke-width="1"/>
<path d="M795 671L790 675.5L795 680Z" fill="#707070" stroke="none" stroke-width="1" />
<rect x="803.5" y="666.5" width="392" height="18" fill="#fff" stroke="#ABABAB" stroke-width="1"/>
<rect x="1196" y="666" width="40" height="19" fill="#DADADA" />
<rect x="1238.5" y="666.5" width="18" height="18" fill="#fff" stroke="#C6C6C6" stroke-width="1"/>
<path d="M1245 671L1250 675.5L1245 680Z" fill="#707070" stroke="none" stroke-width="1" />
<rect x="1" y="690" width="1279" height="1" fill="#D2D2D2" />
<rect x="1" y="691" width="1279" height="27" fill="#FFFFFF" />
<rect x="2" y="691" width="1277" height="26" fill="#F0F0F0" />
<rect x="2" y="691" width="1277" height="1" fill="#F6F6F6" />
<text x="8.40" y="708.8" font-size="12.5" fill="#444" font-weight="normal" font-style="normal" textLength="27.85" lengthAdjust="spacingAndGlyphs" >Kész</text>
<rect x="66.5" y="697.5" width="13" height="13" fill="#fff" stroke="#5A5A5A" stroke-width="1"/>
<rect x="66" y="697" width="14" height="3.5" fill="#5A5A5A" />
<circle cx="68.4" cy="699.3" r="4.5" fill="#F0F0F0"/><circle cx="68.4" cy="699.3" r="3.4" fill="#5A5A5A"/>
<rect x="72" y="702" width="2" height="1.2" fill="#5A5A5A" />
<rect x="75" y="702" width="2" height="1.2" fill="#5A5A5A" />
<rect x="69" y="705" width="2" height="1.2" fill="#5A5A5A" />
<rect x="72" y="705" width="2" height="1.2" fill="#5A5A5A" />
<rect x="75" y="705" width="2" height="1.2" fill="#5A5A5A" />
<rect x="69" y="708" width="2" height="1.2" fill="#5A5A5A" />
<rect x="72" y="708" width="2" height="1.2" fill="#5A5A5A" />
<rect x="75" y="708" width="2" height="1.2" fill="#5A5A5A" />
<rect x="924" y="691" width="42" height="27" fill="#C6C6C6" />
<rect x="937.5" y="696.5" width="15" height="15" fill="none" stroke="#6A6A6A" stroke-width="1"/>
<rect x="942" y="696" width="1" height="16" fill="#6A6A6A" />
<rect x="937" y="701" width="16" height="1" fill="#6A6A6A" />
<rect x="947" y="696" width="1" height="16" fill="#6A6A6A" />
<rect x="937" y="706" width="16" height="1" fill="#6A6A6A" />
<rect x="978.5" y="696.5" width="16" height="15" fill="none" stroke="#6A6A6A" stroke-width="1"/>
<rect x="982.5" y="698.5" width="8" height="10" fill="none" stroke="#6A6A6A" stroke-width="1"/>
<rect x="984" y="700" width="5" height="1" fill="#6A6A6A" />
<rect x="984" y="703" width="5" height="1" fill="#6A6A6A" />
<rect x="984" y="705" width="5" height="1" fill="#6A6A6A" />
<rect x="1020.5" y="696.5" width="16" height="15" fill="none" stroke="#6A6A6A" stroke-width="1"/>
<rect x="1025" y="696" width="1" height="10" fill="#6A6A6A" />
<rect x="1030" y="696" width="1" height="10" fill="#6A6A6A" />
<rect x="1020" y="705" width="11" height="1" fill="#6A6A6A" />
<rect x="1055" y="703" width="10" height="2" fill="#555" />
<rect x="1070" y="704" width="124" height="1" fill="#A0A0A0" />
<rect x="1130" y="697" width="4" height="14" fill="#555" />
<rect x="1199" y="703" width="11" height="2" fill="#555" />
<rect x="1204" y="698" width="2" height="12" fill="#555" />
<text x="1227.00" y="708.8" font-size="12.5" fill="#555" font-weight="normal" font-style="normal" textLength="30.11" lengthAdjust="spacingAndGlyphs" >100%</text></svg></body></html>
